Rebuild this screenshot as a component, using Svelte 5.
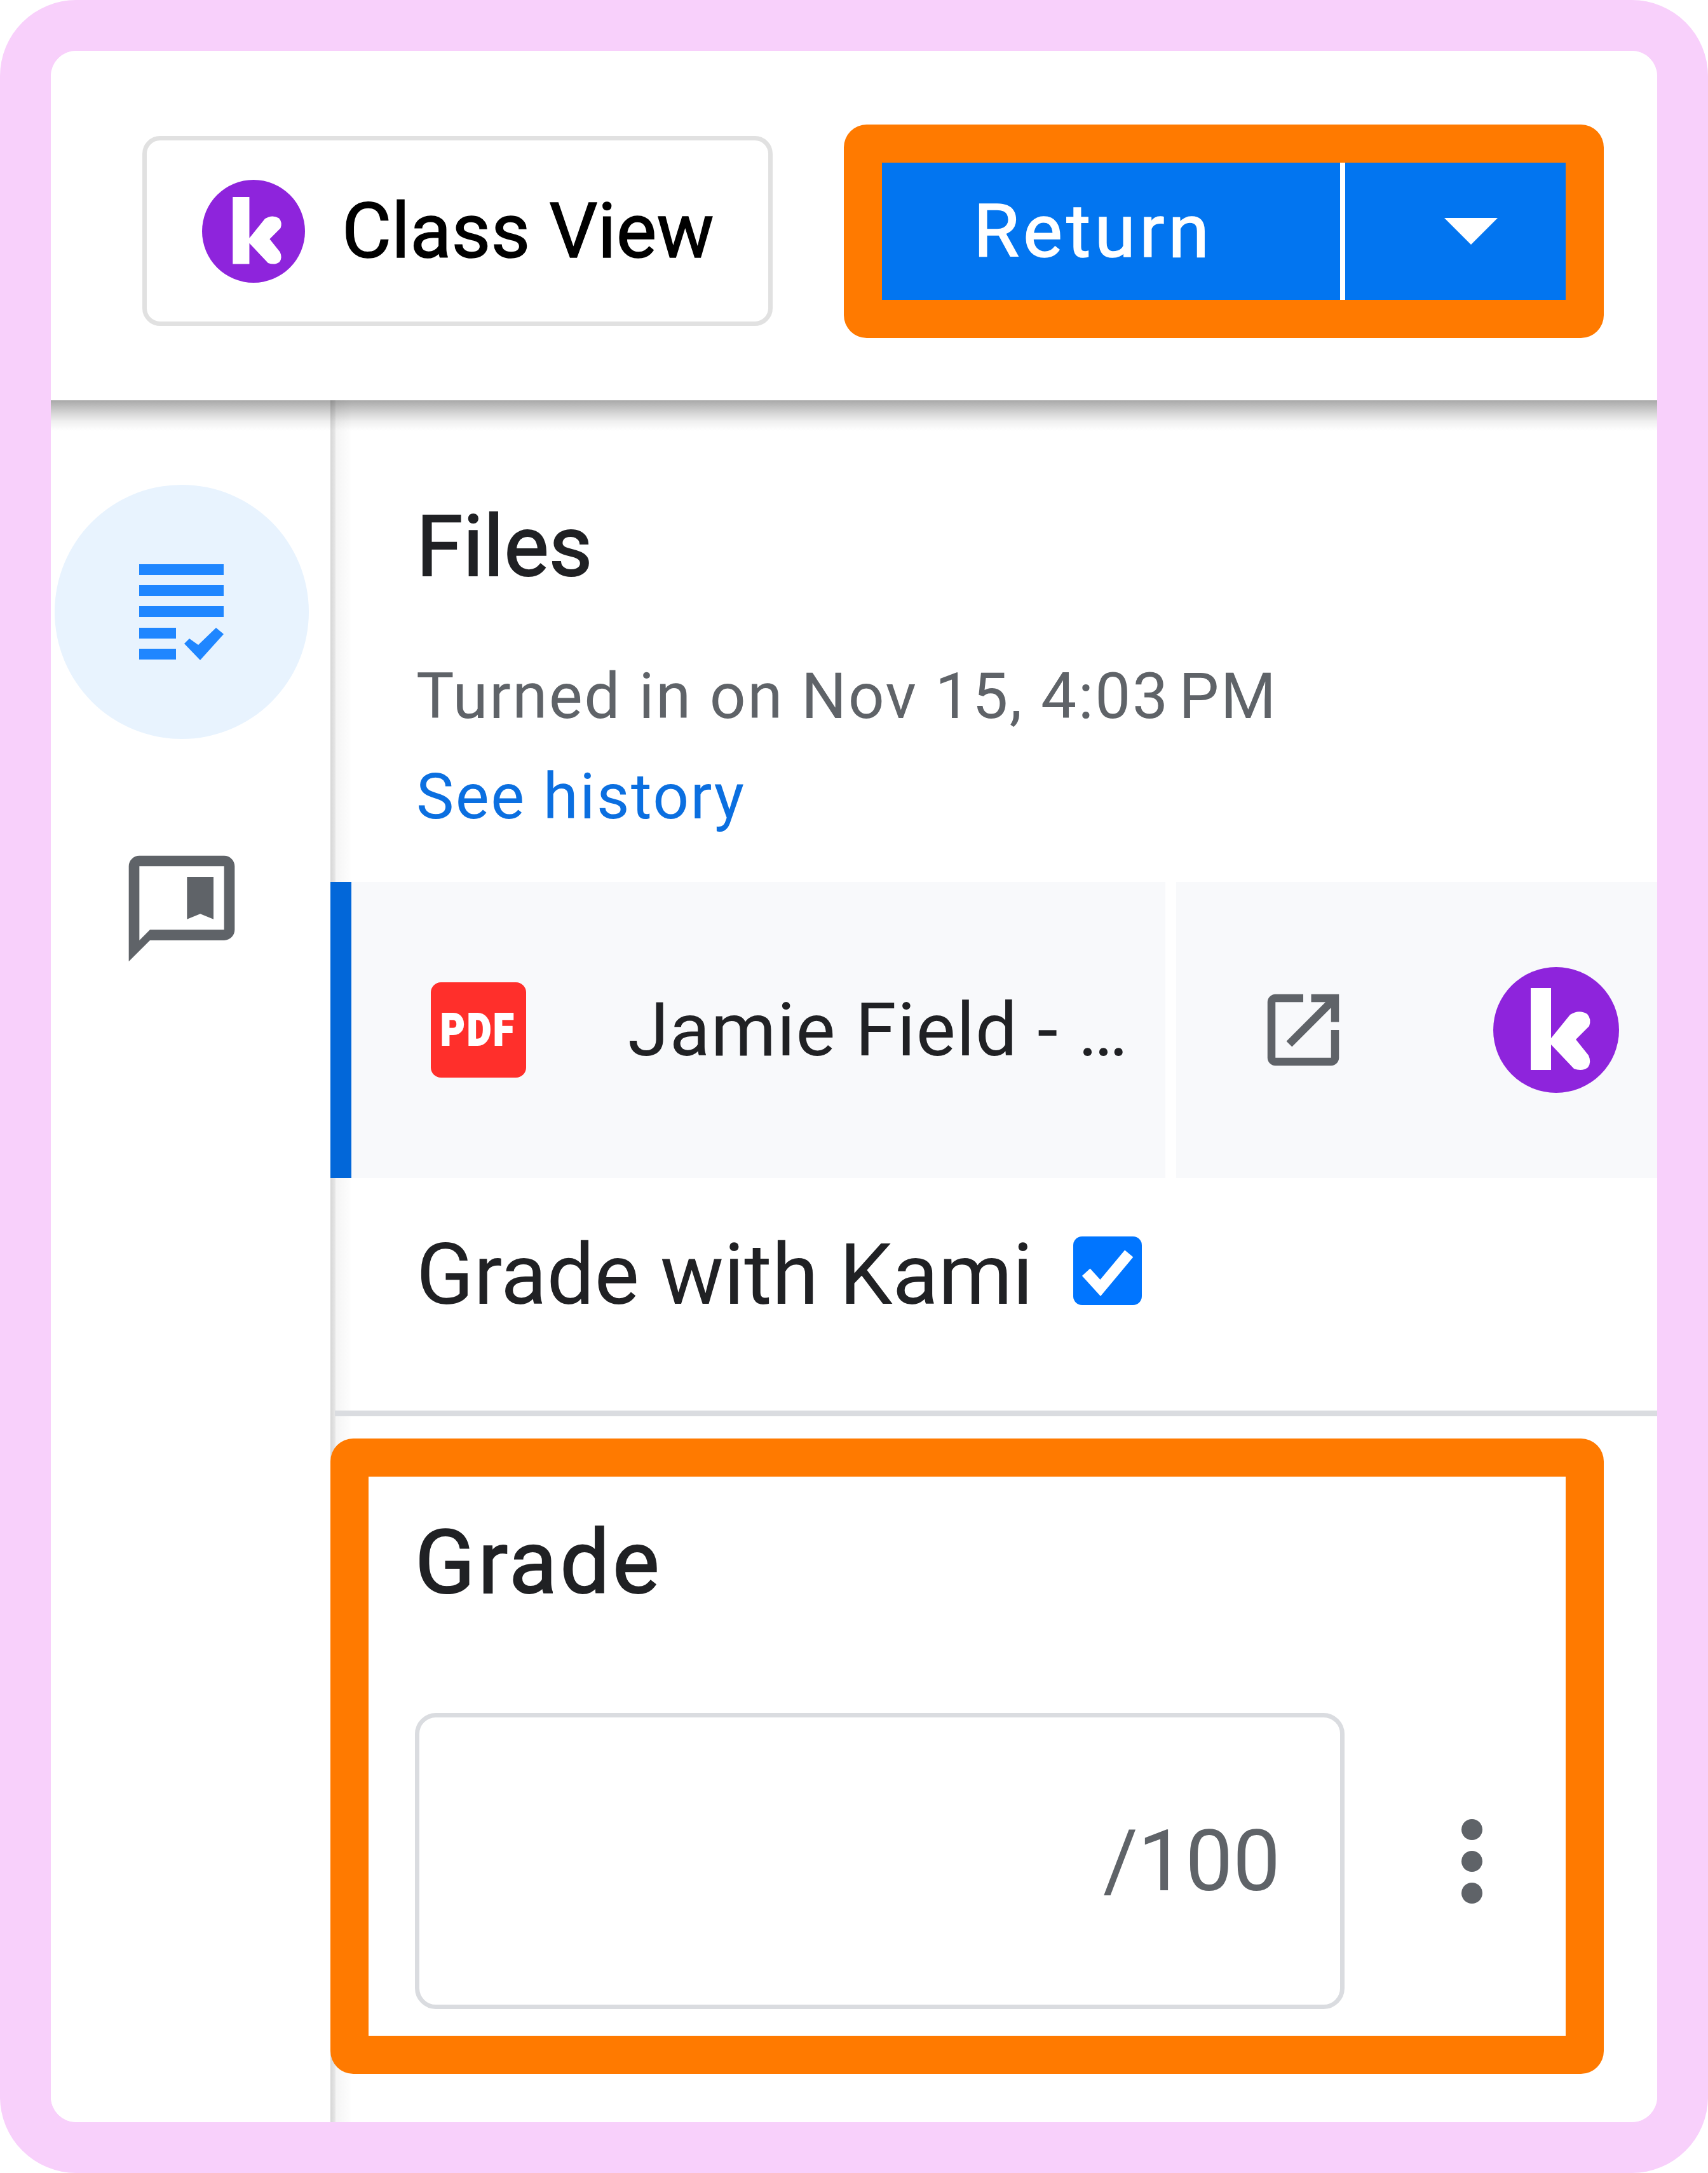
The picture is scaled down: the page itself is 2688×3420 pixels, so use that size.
<script>
  const kamiPath = 'M59 33h32v129H59z M91 112 L121 75 Q135 66 148 74 Q155 82 151 93 L130 114 L150 139 Q155 150 149 158 Q140 165 127 160 L91 122z';
  const fileName = 'Jamie Field - …';
  const turnedIn = 'Turned in on Nov 15, 4:03\u202fPM';
</script>

<div class="frame">
  <div class="panel">
    <header class="topbar">
      <button class="class-view" type="button">
        <svg class="kami-sm" viewBox="0 0 198 198" aria-hidden="true">
          <circle cx="99" cy="99" r="99" fill="#8e24dc" />
          <path d={kamiPath} fill="#fff" />
        </svg>
        <span>Class View</span>
      </button>
      <div class="return-group">
        <button class="return-btn" type="button">Return</button>
        <button class="return-arrow" type="button" aria-label="More">
          <span class="caret"></span>
        </button>
      </div>
    </header>

    <div class="body">
      <nav class="sidebar">
        <div class="tab-active">
          <svg viewBox="0 0 200 200" class="icon-200" aria-hidden="true">
            <path fill="#1f86ff" d="M33 25h133v17H33zM33 58h133v17H33zM33 91h133v17H33zM33 125h58v17H33zM33 158h58v17H33z" />
            <path fill="#1f86ff" d="M104 150l8-8 14 10 28-27 12 10-37 41z" />
          </svg>
        </div>
        <svg viewBox="0 0 24 24" class="icon-200 comment" aria-hidden="true">
          <path fill="#5f6368" d="M20 2H4c-1.1 0-2 .9-2 2v18l4-4h14c1.1 0 2-.9 2-2V4c0-1.1-.9-2-2-2zm0 14H6l-2 2V4h16v12z" />
          <path fill="#5f6368" d="M13 6h5v8l-2.5-1-2.5 1z" />
        </svg>
      </nav>

      <main class="main">
        <section class="files">
          <h2 class="heading">Files</h2>
          <p class="turned-in">{turnedIn}</p>
          <span class="history">See history</span>
        </section>

        <div class="file-row">
          <div class="file-cell">
            <div class="pdf"><span>PDF</span></div>
            <span class="file-name">{fileName}</span>
          </div>
          <div class="file-actions">
            <svg viewBox="0 0 24 24" class="open" aria-hidden="true">
              <path fill="#5f6368" d="M19 19H5V5h7V3H5c-1.11 0-2 .9-2 2v14c0 1.1.89 2 2 2h14c1.1 0 2-.9 2-2v-7h-2v7zM14 3v2h3.59l-9.83 9.83 1.41 1.41L19 6.41V10h2V3h-7z" />
            </svg>
            <svg class="kami-lg" viewBox="0 0 198 198" aria-hidden="true">
              <circle cx="99" cy="99" r="99" fill="#8e24dc" />
              <path d={kamiPath} fill="#fff" />
            </svg>
          </div>
        </div>

        <div class="grade-with">
          <span>Grade with Kami</span>
          <span class="checkbox">
            <svg viewBox="0 0 24 24" aria-hidden="true">
              <path fill="none" stroke="#fff" stroke-width="3.8" d="M4.5 12.5l5 5.5 10-12" />
            </svg>
          </span>
        </div>

        <div class="divider"></div>

        <section class="grade-box">
          <h2 class="heading grade-title">Grade</h2>
          <div class="grade-row">
            <div class="grade-input"><span>/100</span></div>
            <div class="dots"><i></i><i></i><i></i></div>
          </div>
        </section>
      </main>
    </div>
  </div>
</div>

<style>
  :global(body) {
    margin: 0;
    background: #fff;
  }
  .frame {
    width: 2688px;
    height: 3420px;
    box-sizing: border-box;
    padding: 80px;
    background: #f8d0fb;
    border-radius: 120px;
    font-family: Roboto, "Liberation Sans", sans-serif;
  }
  .panel {
    height: 3260px;
    background: #fff;
    border-radius: 40px;
    overflow: hidden;
    display: flex;
    flex-direction: column;
  }
  button {
    font-family: inherit;
    padding: 0;
    cursor: pointer;
  }

  .topbar {
    flex: 0 0 550px;
    box-sizing: border-box;
    position: relative;
    z-index: 2;
    display: flex;
    align-items: center;
    gap: 112px;
    padding: 17px 0 0 144px;
    background: #fff;
  }
  /* header drop shadow, sits over the sidebar and the main column */
  .topbar::after {
    content: "";
    position: absolute;
    left: 0;
    right: 0;
    top: 100%;
    height: 48px;
    background: linear-gradient(to bottom, rgba(0, 0, 0, 0.34), rgba(0, 0, 0, 0.19) 36%, rgba(0, 0, 0, 0.06) 70%, rgba(0, 0, 0, 0));
  }
  .class-view {
    width: 992px;
    height: 299px;
    box-sizing: border-box;
    display: flex;
    align-items: center;
    gap: 58px;
    padding-left: 87px;
    background: #fff;
    border: 7px solid #e1e1e1;
    border-radius: 28px;
    font-size: 120px;
    font-weight: 400;
    -webkit-text-stroke: 1.5px #000;
    color: #000;
  }
  .kami-sm {
    width: 162px;
    height: 162px;
  }
  .return-group {
    width: 1196px;
    height: 336px;
    box-sizing: border-box;
    display: flex;
    border: 60px solid #ff7a00;
    border-radius: 36px;
    background: #0275f0;
  }
  .return-btn {
    width: 721px;
    box-sizing: content-box;
    background: none;
    border: 0;
    border-right: 8px solid #fff;
    padding-right: 0;
    color: #fff;
    font-size: 117px;
    font-weight: 400;
    -webkit-text-stroke: 1.5px #fff;
    letter-spacing: 6px;
    text-align: left;
    text-indent: 144px;
  }
  .return-arrow {
    flex: 1;
    background: none;
    border: 0;
    display: flex;
    align-items: center;
    justify-content: flex-start;
    padding-left: 156px;
  }
  .caret {
    width: 0;
    height: 0;
    border-left: 42px solid transparent;
    border-right: 42px solid transparent;
    border-top: 42px solid #fff;
  }

  .body {
    flex: 1;
    display: flex;
    min-height: 0;
  }
  .sidebar {
    flex: 0 0 440px;
    box-sizing: border-box;
    padding: 133px 0 0 6px;
    background: #fff;
  }
  .tab-active {
    width: 400px;
    height: 400px;
    border-radius: 50%;
    background: #e8f3fe;
    display: flex;
    align-items: center;
    justify-content: center;
  }
  .icon-200 {
    display: block;
    width: 200px;
    height: 200px;
  }
  .comment {
    margin: 167px 0 0 100px;
  }

  .main {
    flex: 1;
    min-width: 0;
    background: linear-gradient(to right, #d6d6d6, #e6e6e6 7px, #f5f5f5 9px, #fcfcfc 28px, #fff 34px);
  }
  .files {
    height: 758px;
    box-sizing: border-box;
    padding: 156px 0 0 135px;
  }
  .heading {
    margin: 0;
    font-size: 133px;
    font-weight: 400;
    -webkit-text-stroke: 2px #202124;
    line-height: 150px;
    color: #202124;
  }
  .turned-in {
    margin: 90px 0 0;
    font-size: 100px;
    line-height: 140px;
    letter-spacing: 2.4px;
    color: #5f6368;
  }
  .history {
    display: block;
    margin-top: 18px;
    font-size: 100px;
    line-height: 140px;
    letter-spacing: 2.4px;
    color: #0b6fe0;
  }

  .file-row {
    height: 466px;
    display: flex;
    gap: 17px;
    background: #fff;
  }
  .file-cell {
    flex: 0 0 1314px;
    box-sizing: border-box;
    display: flex;
    align-items: center;
    gap: 160px;
    padding-left: 125px;
    background: #f8f9fb;
    border-left: 33px solid #0267d9;
  }
  .pdf {
    width: 150px;
    height: 150px;
    flex: none;
    border-radius: 16px;
    background: #ff2f2b;
    display: flex;
    align-items: center;
    justify-content: center;
  }
  .pdf span {
    color: #fff;
    font-size: 70px;
    font-weight: 900;
    letter-spacing: 4px;
    -webkit-text-stroke: 2px #fff;
    transform: scaleX(0.84);
  }
  .file-name {
    font-size: 117px;
    letter-spacing: 1.3px;
    color: #202124;
    white-space: nowrap;
  }
  .file-actions {
    flex: 1;
    display: flex;
    align-items: center;
    gap: 224px;
    padding-left: 125px;
    background: #f8f9fb;
  }
  .open {
    width: 150px;
    height: 150px;
    flex: none;
  }
  .kami-lg {
    width: 198px;
    height: 198px;
    flex: none;
  }

  .grade-with {
    height: 366px;
    box-sizing: border-box;
    display: flex;
    align-items: center;
    gap: 63px;
    padding: 0 0 62px 135px;
    font-size: 133px;
    color: #202124;
  }
  .checkbox {
    width: 108px;
    height: 108px;
    margin-bottom: 12px;
    border-radius: 14px;
    background: #0075ff;
  }
  .checkbox svg {
    display: block;
    width: 108px;
    height: 108px;
  }
  .divider {
    height: 9px;
    margin-left: 7px;
    background: #dadce0;
  }
  .grade-box {
    width: 2004px;
    height: 1000px;
    margin-top: 35px;
    box-sizing: border-box;
    border: 60px solid #ff7a00;
    border-radius: 36px;
    background: #fff;
    padding: 0 0 0 73px;
  }
  .grade-title {
    padding-top: 61px;
    font-size: 139px;
    letter-spacing: 4.5px;
  }
  .grade-row {
    display: flex;
    align-items: center;
    margin-top: 161px;
  }
  .grade-input {
    width: 1463px;
    height: 466px;
    box-sizing: border-box;
    border: 7px solid #dadce0;
    border-radius: 33px;
    display: flex;
    align-items: center;
    justify-content: flex-end;
    padding-right: 94px;
    font-size: 133px;
    color: #5f6368;
  }
  .dots {
    display: flex;
    flex-direction: column;
    gap: 17px;
    margin-left: 184px;
  }
  .dots i {
    display: block;
    width: 33px;
    height: 33px;
    border-radius: 50%;
    background: #5f6368;
  }
</style>
